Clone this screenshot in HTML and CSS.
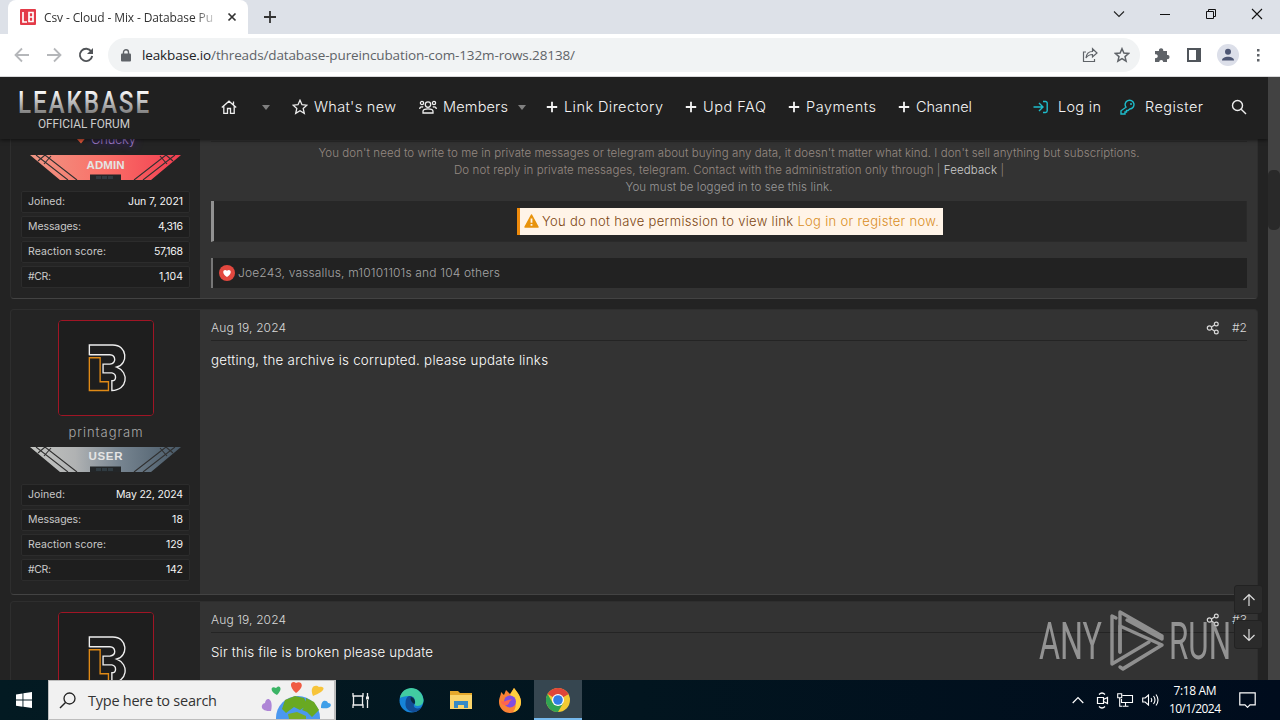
FILE: index.html
```html
<!DOCTYPE html>
<html lang="en">
<head>
<meta charset="utf-8">
<title>Csv - Cloud - Mix - Database</title>
<link rel="stylesheet" href="styles.css">
</head>
<body>
<svg class="defs" width="0" height="0">
  <defs>
    <linearGradient id="silver" x1="0" y1="0" x2="0" y2="1"><stop offset="0.2" stop-color="#fff"/><stop offset="0.85" stop-color="#777"/></linearGradient>
    <linearGradient id="red"><stop offset="0" stop-color="#ef9684"/><stop offset=".5" stop-color="#fa7068"/><stop offset="1" stop-color="#f23d50"/></linearGradient>
    <linearGradient id="grey"><stop offset="0" stop-color="#c4c5c2"/><stop offset=".3" stop-color="#b0b2b3"/><stop offset=".6" stop-color="#768490"/><stop offset="1" stop-color="#485967"/></linearGradient>
    <symbol id="plate" viewBox="0 0 151 25"><path d="M0 0H151L121 25H91V20H60V25H30Z"/><path d="M6 0l32 25M15 0l32 25M8 6L15 0M14 9L21 1M145 0l-32 25M136 0l-32 25M143 6L136 0M137 9L130 1" fill="none" stroke="#303030" stroke-width="1.100"/><path d="M60 19.5H91V25H60Z" fill="#232628"/><path d="M66 22.500H84" stroke="#303b41" stroke-width="3" stroke-dasharray="5 1"/></symbol>
    <symbol id="lb" viewBox="0 0 96 96"><rect width="96" height="96" fill="#1e1e1e"/><path d="M31 35V24.500H55C70 24.500 71 44 59 47C72 52 70 71 54 71V61C59 61 59 54 54 53H45V44H52C59 43 58 35 52 34.500H31Z" fill="none" stroke="#eee" stroke-width="1.4"/><path d="M31 37.500H42V62H50.500V71H31Z" fill="none" stroke="#e08a16" stroke-width="1.4"/></symbol>
    <symbol id="share" viewBox="0 0 14 14"><g fill="none" stroke="currentColor" stroke-width="1.2"><circle cx="3.500" cy="7" r="2.200"/><circle cx="10.300" cy="3" r="1.900"/><circle cx="10.300" cy="11" r="1.900"/><path d="M5.500 6l3-2M5.500 8l3 2"/></g></symbol>
    <symbol id="plus" viewBox="0 0 12 12"><path d="M6 .8v10.400M.8 6h10.400" stroke="currentColor" stroke-width="1.800"/></symbol>
  </defs>
</svg>

<div class="tabs">
  <div class="tab">
    <svg class="favicon" width="16" height="16"><rect width="16" height="16" rx="1" fill="#e33b48"/><path d="M3 3v10h4M9 3.500h4v9H9ZM9 8h4" fill="none" stroke="#fff" stroke-width="1.700"/></svg>
    <span class="tab-title"><span data-w="169">Csv - Cloud - Mix - Database Pu</span></span>
    <svg width="10" height="10"><path d="M1.500 1.500l7 7M8.500 1.500l-7 7" stroke="#333" stroke-width="1.700"/></svg>
  </div>
  <svg class="new-tab" width="14" height="14"><path d="M7 1v12M1 7h12" stroke="#333" stroke-width="1.800"/></svg>
  <div class="window-buttons">
    <svg width="12" height="12"><path d="M1 3.500l5 5 5-5" fill="none" stroke="#222" stroke-width="1.100"/></svg>
    <svg width="12" height="12"><path d="M1 6.500h10" stroke="#111" stroke-width="1"/></svg>
    <svg width="12" height="12"><path d="M1.500 3.500h7v7h-7zM3.500 3.500v-2h7v7h-2" fill="none" stroke="#111"/></svg>
    <svg width="12" height="12"><path d="M1 1l10 10M11 1L1 11" stroke="#111" stroke-width="1.100"/></svg>
  </div>
</div>

<div class="toolbar">
  <div class="history">
    <svg width="16" height="16"><path d="M15 8H2M8 1.500L1.500 8 8 14.500" fill="none" stroke="#b5b7ba" stroke-width="1.800"/></svg>
    <svg width="16" height="16"><path d="M1 8h13M8 1.500L14.500 8 8 14.500" fill="none" stroke="#b5b7ba" stroke-width="1.800"/></svg>
    <svg width="16" height="16"><path d="M13.300 4.500A6.200 6.200 0 1 0 14.200 9" fill="none" stroke="#505357" stroke-width="1.900"/><path d="M15 1v6H9Z" fill="#505357"/></svg>
  </div>
  <div class="address">
    <svg width="10" height="13"><rect y="4.500" width="10" height="8" rx="1" fill="#5f6368"/><path d="M2.500 5V3.200a2.500 2.500 0 0 1 5 0V5" fill="none" stroke="#5f6368" stroke-width="1.400"/></svg>
    <span class="url" data-w="433"><b>leakbase.io</b>/threads/database-pureincubation-com-132m-rows.28138/</span>
    <svg class="send" width="16" height="16"><path d="M4 5H1.500v9.500h11V12M4 11c.5-5 3-6.500 6.500-6.500V1.700L15 6l-4.500 4V7.500C8 7.500 6 8 4 11Z" fill="none" stroke="#5f6368" stroke-width="1.200"/></svg>
    <svg width="16" height="16"><path d="M8 1.700l1.900 4.400 4.700.4-3.600 3.100 1.100 4.600L8 11.700l-4.100 2.500L5 9.600 1.400 6.500l4.700-.4Z" fill="none" stroke="#5f6368" stroke-width="1.500"/></svg>
  </div>
  <div class="tools">
    <svg width="16" height="16"><path d="M1 4h4a2.200 2.200 0 1 1 4.200 0H13v4a2.100 2.100 0 1 1 0 4.100V15H9.200a2 2 0 1 0-4 0H1v-4a2 2 0 1 0 0-3.700Z" fill="#5f6368"/></svg>
    <svg width="14" height="14"><path d="M1 1h12v12H1Z" fill="none" stroke="#50555b" stroke-width="2"/><path d="M9 1h4v12H9Z" fill="#50555b"/></svg>
    <svg width="22" height="22"><circle cx="11" cy="11" r="11" fill="#dcdfe9"/><circle cx="11" cy="7.800" r="3" fill="#4d5673"/><path d="M5 16.500c0-5 12-5 12 0Z" fill="#4d5673"/></svg>
    <svg width="4" height="14"><g fill="#5f6368"><rect x="1" y="1" width="2.500" height="2.500"/><rect x="1" y="6" width="2.500" height="2.500"/><rect x="1" y="11" width="2.500" height="2.500"/></g></svg>
  </div>
</div>

<div class="viewport">
  <main class="page">
    <header class="site-header">
      <svg class="logo" width="132" height="42"><text x="0" y="23.500" font-size="32" font-weight="500" letter-spacing="2.500" textLength="133" lengthAdjust="spacingAndGlyphs" fill="url(#silver)">LEAKBASE</text><text x="20" y="38.500" font-size="13.500" textLength="92" lengthAdjust="spacingAndGlyphs" fill="#ccc">OFFICIAL FORUM</text></svg>
      <nav class="nav">
        <a><svg width="16" height="14"><path d="M.8 7.500L8 1.200l7.200 6.300M2.800 6v7.300h3.700V8.500h3v4.800h3.700V6M12.500 1.500v3" fill="none" stroke="#eee" stroke-width="1.300"/></svg></a>
        <a><i class="caret"></i></a>
        <a><svg width="16" height="16"><path d="M8 1.200l2 4.500 4.900.5-3.700 3.200 1.100 4.900L8 11.700l-4.300 2.600 1.100-4.900L1.100 6.200l4.900-.5Z" fill="none" stroke="#eee" stroke-width="1.300"/></svg><span class="gap" data-w="82">What's new</span></a>
        <a><svg width="18" height="14"><g fill="none" stroke="#eee" stroke-width="1.300"><circle cx="3" cy="3" r="1.600"/><circle cx="15" cy="3" r="1.600"/><circle cx="9" cy="4.600" r="2.700"/><path d="M4 13v-1.500c0-3.500 10-3.500 10 0V13ZM.7 9c0-2 1.500-2.500 3.500-2M17.300 9c0-2-1.500-2.500-3.500-2"/></g></svg><span class="gap" data-w="65">Members</span><i class="caret caret-end"></i></a>
        <a><svg width="12" height="12"><use href="#plus"/></svg><span class="gap" data-w="99">Link Directory</span></a>
        <a><svg width="12" height="12"><use href="#plus"/></svg><span class="gap" data-w="63">Upd FAQ</span></a>
        <a><svg width="12" height="12"><use href="#plus"/></svg><span class="gap" data-w="70">Payments</span></a>
        <a><svg width="12" height="12"><use href="#plus"/></svg><span class="gap" data-w="56">Channel</span></a>
        <a><svg width="16" height="14"><path d="M.5 7h9M6 3l4 4-4 4M10 1.500h2.500a1.700 1.700 0 0 1 1.700 1.700v7.600a1.700 1.700 0 0 1-1.700 1.700H10" fill="none" stroke="#1ebccb" stroke-width="1.400"/></svg><span class="gap-login" data-w="43">Log in</span></a>
        <a><svg width="16" height="16"><path d="M6 8.200A4.400 4.400 0 1 1 9.800 10L8 11.500H6.500V13H5v2H1v-3.200Z" fill="none" stroke="#1ebccb" stroke-width="1.400"/><circle cx="11" cy="5" r="1" fill="#1ebccb"/></svg><span class="gap-login" data-w="58">Register</span></a>
        <a><svg width="16" height="16"><circle cx="6.500" cy="6.500" r="5" fill="none" stroke="#eee" stroke-width="1.400"/><path d="M10.200 10.200L15 15" stroke="#eee" stroke-width="1.400"/></svg></a>
      </nav>
    </header>

    <div class="posts">
      <article class="post post-first">
        <aside class="user">
          <div class="name name-admin"><svg width="12" height="10"><path d="M1 4l2-2 3 3 4-3.500 1 2L6 9.500Z" fill="#e4573a"/></svg><span data-w="45">Chucky</span></div>
          <div class="banner"><svg width="151" height="25" fill="url(#red)"><use href="#plate"/></svg><b data-w="38">ADMIN</b></div>
          <dl class="stats">
            <div><dt data-w="37">Joined:</dt><dd data-w="55">Jun 7, 2021</dd></div>
            <div><dt data-w="53">Messages:</dt><dd data-w="25">4,316</dd></div>
            <div><dt data-w="78">Reaction score:</dt><dd data-w="29">57,168</dd></div>
            <div><dt data-w="23">#CR:</dt><dd data-w="24">1,104</dd></div>
          </dl>
        </aside>
        <section class="body">
          <div class="notice">
            <p><span data-w="821">You don't need to write to me in private messages or telegram about buying any data, it doesn't matter what kind. I don't sell anything but subscriptions.</span></p>
            <p><span data-w="550">Do not reply in private messages, telegram. Contact with the administration only through | <em>Feedback</em> |</span></p>
            <p class="plain"><span data-w="207">You must be logged in to see this link.</span></p>
          </div>
          <div class="quote">
            <div class="alert"><svg width="15" height="14"><path d="M7.500 1L14 13H1Z" fill="#e8930c" stroke="#e8930c" stroke-width="1.500" stroke-linejoin="round"/><path d="M7.500 4.500v4.300M7.500 10v1.700" stroke="#fff4e5" stroke-width="1.800"/></svg><span data-w="397">You do not have permission to view link <em>Log in or register now.</em></span></div>
          </div>
          <div class="reactions"><svg width="16" height="16"><circle cx="8" cy="8" r="8" fill="#e2483f"/><path d="M8 12C1 7 5.500 3 8 5.800 10.500 3 15 7 8 12Z" fill="#fff"/></svg><span data-w="262">Joe243, vassallus, m10101101s and 104 others</span></div>
        </section>
      </article>

      <article class="post">
        <aside class="user">
          <svg class="avatar" width="94" height="94"><use href="#lb"/></svg>
          <div class="name"><span data-w="74">printagram</span></div>
          <div class="banner"><svg width="151" height="25" fill="url(#grey)"><use href="#plate"/></svg><b data-w="34">USER</b></div>
          <dl class="stats">
            <div><dt data-w="37">Joined:</dt><dd data-w="67">May 22, 2024</dd></div>
            <div><dt data-w="53">Messages:</dt><dd data-w="11">18</dd></div>
            <div><dt data-w="78">Reaction score:</dt><dd data-w="17">129</dd></div>
            <div><dt data-w="23">#CR:</dt><dd data-w="17">142</dd></div>
          </dl>
        </aside>
        <section class="body">
          <div class="meta"><time data-w="75">Aug 19, 2024</time><svg width="14" height="14"><use href="#share"/></svg><span data-w="15">#2</span></div>
          <p class="message"><span data-w="337">getting, the archive is corrupted. please update links</span></p>
        </section>
      </article>

      <article class="post post-last">
        <aside class="user">
          <svg class="avatar" width="94" height="94"><use href="#lb"/></svg>
        </aside>
        <section class="body">
          <div class="meta"><time data-w="75">Aug 19, 2024</time><svg width="14" height="14"><use href="#share"/></svg><span data-w="15">#3</span></div>
          <p class="message"><span data-w="222">Sir this file is broken please update</span></p>
        </section>
      </article>
    </div>

    <div class="jump">
      <span><svg width="14" height="14"><path d="M7 13V1.500M1.500 7L7 1.500 12.500 7" fill="none" stroke="#ddd" stroke-width="1.200"/></svg></span>
      <span><svg width="14" height="14"><path d="M7 1v11.500M1.500 7L7 12.500 12.500 7" fill="none" stroke="#ddd" stroke-width="1.200"/></svg></span>
    </div>
    <svg class="watermark" width="194" height="64">
      <g fill="#b4b4b4"><text x="0" y="50" font-size="52" textLength="63" lengthAdjust="spacingAndGlyphs">ANY</text><text x="130" y="50" font-size="52" textLength="62" lengthAdjust="spacingAndGlyphs">RUN</text></g>
      <g fill="none" stroke="#aeaeae" stroke-width="3.400" stroke-linejoin="round" stroke-linecap="round"><path d="M81 43V3L123 27V30L88 11"/><path d="M77 9L73 7V55L110 33"/><path d="M123 36L84 60 81 58M81 43V17L123 36L85 59"/></g>
    </svg>
  </main>
  <div class="scrollbar"><div class="thumb"></div></div>
</div>

<footer class="taskbar">
  <div class="start"><svg width="16" height="16" fill="#fff"><path d="M0 2.400L6.500 1.400V7.600H0ZM7.400 1.300L16 0V7.600H7.400ZM0 8.500H6.500V14.700L0 13.700ZM7.400 8.500H16V16L7.400 14.800Z"/></svg></div>
  <div class="search">
    <svg class="lens" width="17" height="17"><circle cx="10.500" cy="6.500" r="5.500" fill="none" stroke="#222" stroke-width="1.300"/><path d="M6.500 10.500L1 16" stroke="#222" stroke-width="1.400"/></svg>
    <span data-w="129">Type here to search</span>
    <svg class="globe" width="72" height="38"><circle cx="37" cy="37" r="22" fill="#4b98ef"/><path d="M24 19l10-4 9 2 4 7-8 5-6-3-8 6-4-4ZM45 17l8 4 5 8-7 7-5-5-5-2 4-5Z" fill="#69a922"/><path d="M27 33l9-2 9 4v3H28Z" fill="#78ad27"/><path d="M35 12C26 4 31-1 35 2 40-1 45 5 35 12Z" fill="#f05b43"/><path d="M16 14C8 10 10 4 15 7 18 3 23 7 16 14Z" fill="#3bb465"/><path d="M52 15C48 5 55 3 58 6 64 5 66 10 52 15Z" fill="#f7c43a"/><path d="M10 30C-1 31-1 23 4 22 5 15 13 17 10 30Z" fill="#ae85d6"/><path d="M60 27C60 18 66 19 67 22 72 22 71 29 60 27Z" fill="#3f9ee8"/></svg>
  </div>
  <div class="apps">
    <div class="view"><svg width="17" height="17"><path d="M1 1v3h10V1M1 16v-3h10v3M1.500 4v9M10.500 4v9M15.500 1v4M15.500 8v8" fill="none" stroke="#eee" stroke-width="1.300"/><rect x="14" y="4.500" width="3" height="3" fill="#eee"/></svg></div>
    <div><svg width="25" height="25"><circle cx="12.500" cy="12.500" r="12" fill="#1683d8"/><path d="M1 10C3-3 22-4 24.500 12c0 6-6 7-9 5 2-3 0-9-6-9-4 0-7 1-8.500 2Z" fill="#42cba1"/><path d="M10 8c6 0 6 4 5.500 8-3 4 4 6 7 3-4 8-17 6-16-4 0-3 1-6 3.500-7Z" fill="#124c96"/><path d="M12 9c3 1 5 4 3.500 7-2-1-5-4-3.500-7Z" fill="#0a2940"/></svg></div>
    <div><svg width="22" height="20"><path d="M0 1h8l2 2h12v16H0Z" fill="#e6a92c"/><path d="M0 5h22v14H0Z" fill="#fbd56b"/><path d="M4 18v-7h14v7h-4v-3H8v3Z" fill="#378ac5"/></svg></div>
    <div><svg width="24" height="25"><path d="M3 4l3 3 2-5 4 4 4-6c5 6 7 10 7 14A11 11 0 0 1 1 14C1 9 3 8 3 4Z" fill="#fb8235"/><path d="M16 0c5 6 7 10 7 14 0 6-4 10-8 10 6-7 1-14-3-17Z" fill="#ffcf3e"/><circle cx="12" cy="13.500" r="6" fill="#814de0"/><path d="M3 13c4 2 9-3 11-1-4 1-2 6-7 5-3 0-4-2-4-4Z" fill="#ff6450"/></svg></div>
    <div class="active"><svg width="24" height="24"><circle cx="12" cy="12" r="12" fill="#f3ca33"/><path d="M12 12L1.600 6A12 12 0 0 1 22.400 6Z" fill="#df4639"/><path d="M12 12L22.400 6H12Z" fill="#df4639"/><path d="M1.600 6A12 12 0 0 0 12 24L17.200 15 12 12 6.800 15Z" fill="#31a353"/><circle cx="12" cy="12" r="6" fill="#fff"/><circle cx="12" cy="12" r="4.800" fill="#317de5"/></svg></div>
  </div>
  <div class="tray">
    <svg width="12" height="8"><path d="M.7 7L6 1.500 11.300 7" fill="none" stroke="#fff" stroke-width="1.200"/></svg>
    <svg width="13" height="17"><path d="M1.500 5.500h6v6h-6ZM7.500 7.500L11.500 5.500v6L7.500 9.500M3 2.500c2-2 4-2 6 0M3 14.500c2 2 4 2 6 0" fill="none" stroke="#fff" stroke-width="1.200"/></svg>
    <svg width="17" height="14"><path d="M5.500 2.500h10v7h-11V6M8.500 10v3M5.500 13.300h6M.7.700h4v4h-4ZM2.700 5v8.300H5" fill="none" stroke="#fff" stroke-width="1.100"/></svg>
    <svg width="17" height="14"><path d="M.7 5h2.500L6.500 2v10L3.200 9H.7ZM9 5q1.500 2 0 4M11.500 3q3 4 0 8M14 1.500q4 5.500 0 11" fill="none" stroke="#fff" stroke-width="1.100"/></svg>
    <div class="clock"><span data-w="43">7:18 AM</span><span data-w="52">10/1/2024</span></div>
    <svg width="17" height="16"><path d="M.8.800h15.400v12H11l-2.500 2.500L6 12.800H.8Z" fill="none" stroke="#fff" stroke-width="1.200"/></svg>
  </div>
</footer>
<script src="fit.js"></script>
</body>
</html>
```
FILE: styles.css
```css
* { box-sizing: border-box; }
body { margin: 0; width: 1280px; height: 720px; overflow: hidden; background: #232323; font-family: Inter, "Liberation Sans", sans-serif; }
svg { display: block; flex: none; }
.defs { position: absolute; }
p, dl, dd { margin: 0; }
em { font-style: normal; }
[data-w] { white-space: nowrap; }

.tabs { display: flex; height: 34px; padding-left: 8px; background: #dde1e8; align-items: center; font: 12px "Open Sans", sans-serif; color: #333; }
.tab { display: flex; align-items: center; width: 240px; height: 34px; padding: 0 11px 0 12px; background: #fff; border-radius: 8px 8px 0 0; }
.tab-title { flex: 1; margin-left: 8px; padding-right: 8px; overflow: hidden; white-space: nowrap; -webkit-mask-image: linear-gradient(90deg, #000 82%, transparent 96%); mask-image: linear-gradient(90deg, #000 82%, transparent 96%); }
.new-tab { margin-left: 15px; }
.window-buttons { display: flex; gap: 34px; margin-left: auto; padding: 0 17px 6px 0; }

.toolbar { display: flex; align-items: center; height: 43px; background: #fff; border-bottom: 1px solid #d8d8da; }
.history { display: flex; gap: 16px; width: 108px; padding-left: 14px; }
.address { display: flex; align-items: center; width: 1032px; height: 34px; padding: 0 10px 0 13px; border-radius: 17px; background: #f1f3f4; }
.url { margin-left: 11px; padding-bottom: 1px; font: 13.5px "Open Sans", sans-serif; color: #5f6368; }
.url b { font-weight: 400; color: #202124; }
.send { margin: 0 16px 0 auto; }
.tools { display: flex; flex: 1; align-items: center; justify-content: space-between; padding: 0 20px 0 14px; }

.viewport { display: flex; height: 603px; background: #232323; }
.page { position: relative; width: 1268px; height: 603px; overflow: hidden; font-weight: 300; }
.scrollbar { width: 12px; padding-top: 93px; background: #424242; }
.thumb { height: 60px; border-radius: 5px; background: #292929; }

.site-header { position: relative; display: flex; height: 62px; background: #202020; box-shadow: 0 1px 4px rgba(0, 0, 0, .6); }
.logo { margin: 12px 0 0 18px; font-family: Roboto, sans-serif; font-weight: 400; }
.nav { display: grid; grid-template-columns: 40px 31px 127px 127px 139px 103px 110px 135px 87px 111px 20px; margin-left: 71px; height: 60px; align-items: center; color: #f4f4f4; font-size: 14.5px; }
.nav a { display: flex; align-items: center; }
.nav span { padding-bottom: 1px; }
.gap { margin-left: 6px; }
.gap-login { margin-left: 9px; }
.caret { border: 4px solid transparent; border-top: 5px solid #808080; border-bottom: 0; }
.nav .caret { margin-left: 1px; }
.nav .caret-end { margin-left: 10px; }

.posts { height: 541px; padding: 0 10px; overflow: hidden; }
.post { display: flex; height: 286px; margin-bottom: 6px; border: 1px solid #2e2e2e; border-bottom-color: #434343; border-radius: 4px; background: #333; overflow: hidden; }
.post-first { height: 160px; margin-bottom: 10px; border-top: 0; border-radius: 0 0 4px 4px; }
.post-last { height: 120px; }
.user { display: flex; flex-direction: column; align-items: center; width: 189px; background: #242424; }
.avatar { box-sizing: content-box; margin-top: 10px; border: 1px solid #a01525; border-radius: 4px; }
.name { display: flex; height: 20px; margin-top: 6px; padding-bottom: 1px; align-items: center; justify-content: center; gap: 4px; color: #aaa; font-size: 13px; }
.name-admin { margin-top: -10px; color: #9a78c5; text-shadow: 0 0 8px #5a25b5; }
.banner { display: grid; margin-top: 6px; justify-items: center; }
.post:not(.post-first) .banner { margin-top: 5px; }
.banner > * { grid-area: 1 / 1; }
.banner b { position: relative; margin-top: 1px; font: bold 11.5px/16px "Liberation Sans", sans-serif; color: #e4e4e4; }
.post-first .banner b { margin-top: 2px; }
.stats { width: 169px; margin-top: 11px; font-size: 10.5px; font-weight: 400; }
.post:not(.post-first) .stats { margin-top: 12px; }
.stats div { display: flex; height: 22px; margin-bottom: 3px; padding: 0 6px 1px; justify-content: space-between; align-items: center; border: 1px solid #2c2c2c; border-radius: 2px; background: #1e1e1e; color: #f4f4f4; }
.stats dt { color: #c9c9c9; }
.body { flex: 1; padding: 0 10px 0 11px; background: #333; }
.notice { margin-top: 2px; padding-top: 3px; border-top: 1px solid #292929; text-align: center; color: #958982; font-size: 11.5px; line-height: 17px; }
.notice em { color: #ccc; }
.notice .plain { color: #999; }
.quote { display: flex; height: 41px; margin-top: 5px; padding-top: 7px; justify-content: center; border: solid #2a2a2a; border-width: 0 1px 1px 0; border-left: 3px solid #929292; background: #272727; }
.alert { display: flex; width: 426px; height: 27px; padding: 0 0 1px 4px; align-items: center; gap: 3px; border-left: 3px solid #ef8b0c; background: #fff4e8; color: #7d4610; font-size: 13px; }
.alert em { color: #d98d1e; }
.reactions { display: flex; height: 30px; margin-top: 16px; padding-left: 6px; gap: 3px; align-items: center; border-left: 2px solid #777; background: #222; color: #a5a5a5; font-size: 12px; }
.reactions span { padding-bottom: 1px; }
.meta { display: flex; height: 31px; padding-top: 5px; align-items: center; border-bottom: 1px solid #242424; color: #d8d8d8; font-size: 12px; }
.meta svg { margin: 0 12px 0 auto; }
.message { margin-top: 9px; color: #fff; font-size: 13.3px; line-height: 20px; }

.jump { position: absolute; right: 5px; top: 508px; display: flex; flex-direction: column; gap: 6px; }
.jump span { display: flex; width: 29px; height: 29px; align-items: center; justify-content: center; border: 1px solid #222; border-radius: 3px; background: #2b2b2b; }
.watermark { position: absolute; left: 1039px; top: 532px; opacity: .75; font-family: Roboto, sans-serif; font-weight: 400; }

.taskbar { display: flex; height: 40px; color: #fff; background: linear-gradient(90deg, #031a22, #02151f 50%, #000c1d); font-family: "Open Sans", sans-serif; }
.start { display: flex; width: 48px; align-items: center; justify-content: center; }
.search { display: flex; width: 288px; padding: 0 0 0 10px; align-items: center; border: 2px solid #bdbdbd; border-width: 1px 2px 1px 1px; background: #f1f1f1; color: #333; font-size: 14.5px; }
.search span { margin-left: 12px; }
.globe { margin: 0 1px 0 auto; }
.apps { display: flex; }
.apps div { display: flex; width: 49px; height: 40px; align-items: center; justify-content: center; }
.apps .view { width: 51px; padding-right: 3px; }
.apps .active { width: 48px; padding-top: 2px; background: #364650; border-bottom: 2px solid #76b9ed; }
.tray { display: flex; flex: 1; align-items: center; justify-content: flex-end; gap: 8px; padding-right: 24px; }
.tray > svg:first-child { margin-right: 4px; }
.clock { display: flex; flex-direction: column; width: 56px; margin-right: 8px; align-items: center; font-size: 12px; line-height: 18px; }
```
FILE: fit.js
```js
// Track each label so that it fills the width reserved for it.
document.querySelectorAll("[data-w]").forEach(function (label) {
  var range = document.createRange();
  range.selectNodeContents(label);
  var natural = range.getBoundingClientRect().width;
  var spacing = (label.dataset.w - natural) / (label.textContent.length - 1);
  label.style.letterSpacing = spacing.toFixed(3) + "px";
  label.style.marginRight = (-spacing).toFixed(3) + "px";
});
```
